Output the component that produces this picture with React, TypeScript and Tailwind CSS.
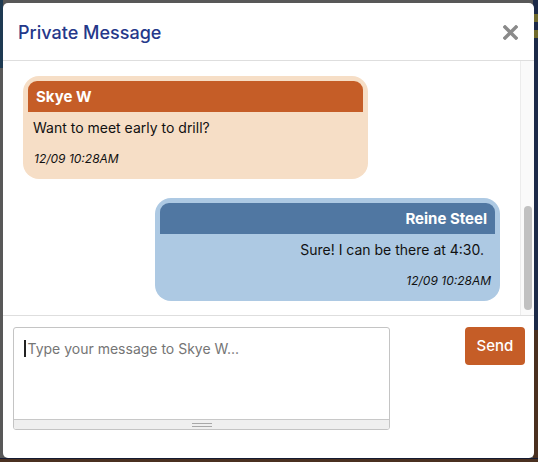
const messages = [
  {
    from: "Skye W",
    body: "Want to meet early to drill?",
    time: "12/09 10:28AM",
    mine: false,
  },
  {
    from: "Reine Steel",
    body: "Sure! I can be there at 4:30.",
    time: "12/09 10:28AM",
    mine: true,
  },
];

function CloseIcon() {
  return (
    <svg width="15" height="15" viewBox="0 0 15 15" aria-hidden="true">
      <path d="M2 2 L13 13 M13 2 L2 13" stroke="#8a8a8a" strokeWidth="3.4" strokeLinecap="square" />
    </svg>
  );
}

function Bubble({ m }: { m: (typeof messages)[number] }) {
  return (
    <div
      className={`w-[345px] rounded-[16px] p-[5px] pb-[12px] ${
        m.mine ? "self-end bg-[#adc9e3] text-right" : "self-start bg-[#f6dec6]"
      }`}
    >
      <div
        className={`h-[31px] rounded-t-[9px] px-2 text-[15px] font-bold leading-[31px] text-white ${
          m.mine ? "bg-[#5077a2]" : "bg-[#c55d27]"
        }`}
      >
        {m.from}
      </div>
      <div className={`mt-[5px] text-[14px] leading-[22px] text-[#111] ${m.mine ? "pr-[11px]" : "pl-[5px]"}`}>
        {m.body}
      </div>
      <div className={`mt-[12px] text-[12px] italic leading-[16px] text-[#111] ${m.mine ? "pr-[4px]" : "pl-[6px]"}`}>
        {m.time}
      </div>
    </div>
  );
}

export default function App() {
  return (
    <div className="relative h-[462px] w-[538px] overflow-hidden bg-[#585858] font-['Inter',sans-serif]">
      {/* page behind the overlay */}
      <div className="absolute left-0 top-0 h-[68px] w-[3px] bg-[#1e3a52]" />
      <div className="absolute right-0 top-0 h-[462px] w-[5px] bg-[#1c2a48]" />
      <div className="absolute right-0 top-[14px] h-[8px] w-[5px] bg-[#6f6a2c]" />
      <div className="absolute right-0 top-[30px] h-[8px] w-[5px] bg-[#6f6a2c]" />
      <div className="absolute right-0 top-[330px] h-[130px] w-[5px] bg-[#4a3020]" />
      <div className="absolute bottom-0 left-0 h-[3px] w-[538px] bg-[#4a3020]" />
      <div className="absolute bottom-[3px] left-0 h-[1px] w-[538px] bg-[#141b33]" />

      <div className="relative pl-[3px] pt-[3px]">
        <div className="flex h-[455px] w-[531px] flex-col overflow-hidden rounded-[5px] bg-white">
          {/* header */}
          <div className="flex h-[58px] shrink-0 items-center justify-between border-b border-[#dedede] pl-[15px] pr-[16px] pt-[2px]">
            <h2 className="text-[18px] font-medium text-[#25388a]">Private Message</h2>
            <CloseIcon />
          </div>

          {/* conversation */}
          <div className="flex h-[255px] shrink-0 border-b border-[#dedede]">
            <div className="flex flex-1 flex-col gap-[19px] px-[20px] pt-[15px]">
              {messages.map((m, i) => (
                <Bubble key={i} m={m} />
              ))}
            </div>
            <div className="flex w-[14px] flex-col justify-end border-l border-[#ececec] bg-[#fafafa] pb-[5px] pl-[3px]">
              <div className="h-[104px] w-[8px] rounded-full bg-[#c1c1c1]" />
            </div>
          </div>

          {/* composer */}
          <div className="flex items-start justify-between pl-[10px] pr-[9px] pt-[11px]">
            <div className="flex h-[103px] w-[377px] flex-col overflow-hidden rounded-[3px] border border-[#c4c4c4]">
              <div className="flex flex-1 items-start pl-[10px] pt-[12px]">
                <span className="mr-[2px] h-[17px] w-[1.5px] bg-[#222]" />
                <span className="text-[14px] leading-[17px] text-[#757575]">Type your message to Skye W...</span>
              </div>
              <div className="flex h-[10px] flex-col items-center justify-center gap-[2px] border-t border-[#c8c8c8] bg-[#efefef]">
                <span className="h-px w-[20px] bg-[#a8a8a8]" />
                <span className="h-px w-[20px] bg-[#a8a8a8]" />
              </div>
            </div>
            <button className="h-[38px] w-[60px] rounded-[4px] bg-[#c55d27] text-[15px] font-medium text-white">
              Send
            </button>
          </div>
        </div>
      </div>
    </div>
  );
}
